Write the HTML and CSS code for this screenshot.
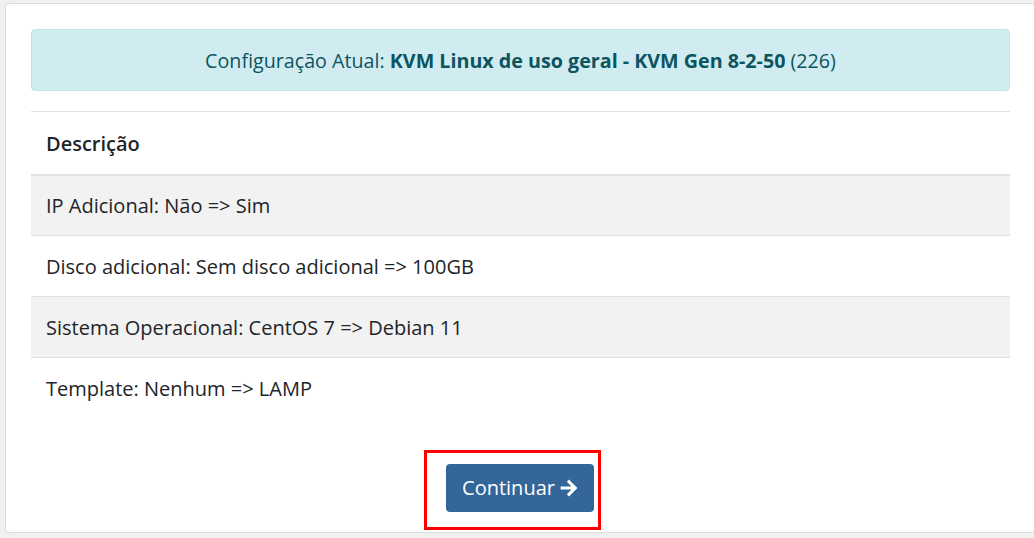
FILE: index.html
```html
<!DOCTYPE html>
<html lang="pt">
<head>
<meta charset="utf-8">
<title>Upgrade</title>
<link rel="stylesheet" href="styles.css">
</head>
<body>
<div class="card">
  <div class="alert">Configuração Atual: <strong>KVM Linux de uso geral - KVM Gen 8-2-50</strong> (226)</div>
  <table class="table">
    <thead>
      <tr><th>Descrição</th></tr>
    </thead>
    <tbody>
      <tr class="odd"><td>IP Adicional: Não =&gt; Sim</td></tr>
      <tr><td>Disco adicional: Sem disco adicional =&gt; 100GB</td></tr>
      <tr class="odd"><td>Sistema Operacional: CentOS 7 =&gt; Debian 11</td></tr>
      <tr><td>Template: Nenhum =&gt; LAMP</td></tr>
    </tbody>
  </table>
  <div class="actions">
    <div class="highlight">
      <button class="btn" type="button">Continuar <svg class="arrow" viewBox="0 0 16 16" width="18" height="18" aria-hidden="true"><path d="M2 8h11M8 2.5l5.5 5.5L8 13.5" fill="none" stroke="#fff" stroke-width="2.8" stroke-linecap="square" stroke-linejoin="miter"/></svg></button>
    </div>
  </div>
</div>
</body>
</html>
```
FILE: styles.css
```css
html, body {
  margin: 0;
  padding: 0;
}
body {
  background: #f0f0f0;
  font-family: "Open Sans", "Liberation Sans", sans-serif;
  color: #212529;
  padding: 3px 0 0 5px;
  height: 538px;
  box-sizing: border-box;
  overflow: hidden;
}
.card {
  background: #fff;
  border: 1px solid #dcdcdc;
  border-radius: 4px;
  height: 530px;
  box-sizing: border-box;
  padding: 25px 25px 0 25px;
  margin-right: -2px;
}
.alert {
  background: #d1ecf1;
  border: 1px solid #bee5eb;
  border-radius: 4px;
  color: #0c5460;
  font-size: 19.7px;
  line-height: 27px;
  height: 62px;
  box-sizing: border-box;
  display: flex;
  align-items: center;
  justify-content: center;
  white-space: pre;
}
.alert strong {
  font-weight: 700;
}
.table {
  width: 100%;
  border-collapse: collapse;
  margin-top: 20px;
  font-size: 20px;
  line-height: 28px;
}
.table th, .table td {
  text-align: left;
  padding: 0 15px;
  height: 61px;
  box-sizing: border-box;
  vertical-align: middle;
}
.table th {
  font-weight: 600;
  border-top: 1px solid #dee2e6;
  border-bottom: 2px solid #dee2e6;
  height: 63px;
  padding-top: 2px;
}
.table td {
  border-top: 1px solid #dee2e6;
  padding-top: 2px;
}
.table tr.odd td {
  background: #f2f2f2;
}
.table tbody tr:first-child td {
  border-top: 0;
  height: 61px;
}
.actions {
  display: flex;
  justify-content: center;
  margin-top: 31px;
  padding-right: 16px;
}
.highlight {
  border: 3px solid #ff0000;
  padding: 11px 4px 15px 19px;
}
.btn {
  background: #346699;
  color: #fff;
  border: 0;
  border-radius: 4px;
  font-family: "Open Sans", "Liberation Sans", sans-serif;
  font-size: 20px;
  line-height: 24px;
  width: 148px;
  height: 48px;
  padding: 0;
  display: flex;
  align-items: center;
  justify-content: center;
  gap: 5px;
}
.arrow {
  display: block;
}
```
